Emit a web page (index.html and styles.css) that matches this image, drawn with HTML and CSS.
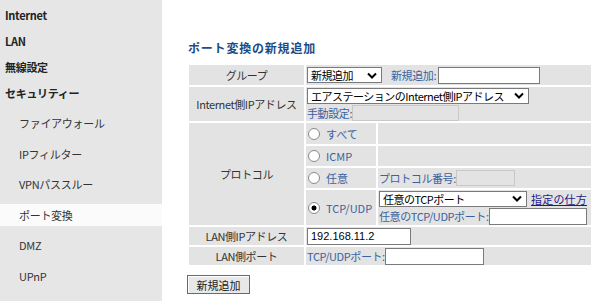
FILE: index.html
```html
<!DOCTYPE html>
<html lang="ja">
<head>
<meta charset="utf-8">
<link rel="stylesheet" href="styles.css">
</head>
<body>
<div class="page">
  <nav class="side">
    <div class="top">Internet</div>
    <div class="top">LAN</div>
    <div class="top">無線設定</div>
    <div class="top">セキュリティー</div>
    <div class="subs">
      <div class="sub">ファイアウォール</div>
      <div class="sub">IPフィルター</div>
      <div class="sub">VPNパススルー</div>
      <div class="sub active">ポート変換</div>
      <div class="sub">DMZ</div>
      <div class="sub">UPnP</div>
    </div>
  </nav>
  <main class="main">
    <h1 class="title">ポート変換の新規追加</h1>
    <table class="form">
      <tr class="r-group">
        <th>グループ</th>
        <td colspan="2">
          <div class="line">
            <span class="sel w-group"><span class="sel-text">新規追加</span><svg class="chev" width="10" height="7" viewBox="0 0 10 7"><path d="M1 1.5 L5 5.5 L9 1.5" fill="none" stroke="#000" stroke-width="2"/></svg></span>
            <span class="blue lbl-new">新規追加:</span><input class="txt w-new" type="text">
          </div>
        </td>
      </tr>
      <tr class="r-inet">
        <th>Internet側IPアドレス</th>
        <td colspan="2">
          <div class="stack">
            <span class="sel w-inet"><span class="sel-text">エアステーションのInternet側IPアドレス</span><svg class="chev" width="10" height="7" viewBox="0 0 10 7"><path d="M1 1.5 L5 5.5 L9 1.5" fill="none" stroke="#000" stroke-width="2"/></svg></span>
            <div class="line"><span class="blue">手動設定:</span><input class="txt dis w-manual" type="text" disabled></div>
          </div>
        </td>
      </tr>
      <tr class="r-all">
        <th rowspan="4">プロトコル</th>
        <td class="radio-cell"><label class="rad"><input type="radio" name="p"><span>すべて</span></label></td>
        <td></td>
      </tr>
      <tr class="r-icmp">
        <td class="radio-cell"><label class="rad"><input type="radio" name="p"><span>ICMP</span></label></td>
        <td></td>
      </tr>
      <tr class="r-any">
        <td class="radio-cell"><label class="rad"><input type="radio" name="p"><span>任意</span></label></td>
        <td><div class="line"><span class="blue">プロトコル番号:</span><input class="txt dis w-proto" type="text" disabled></div></td>
      </tr>
      <tr class="r-tcp">
        <td class="radio-cell"><label class="rad"><input type="radio" name="p" checked><span>TCP/UDP</span></label></td>
        <td class="tcp-cell">
          <div class="stack">
            <div class="line"><span class="sel w-tcp"><span class="sel-text">任意のTCPポート</span><svg class="chev" width="10" height="7" viewBox="0 0 10 7"><path d="M1 1.5 L5 5.5 L9 1.5" fill="none" stroke="#000" stroke-width="2"/></svg></span><a class="link" href="#">指定の仕方</a></div>
            <div class="line"><span class="blue">任意のTCP/UDPポート:</span><input class="txt w-anyport" type="text"></div>
          </div>
        </td>
      </tr>
      <tr class="r-lanip">
        <th>LAN側IPアドレス</th>
        <td colspan="2"><input class="txt w-lanip" type="text" value="192.168.11.2"></td>
      </tr>
      <tr class="r-lanport">
        <th>LAN側ポート</th>
        <td colspan="2"><div class="line"><span class="blue">TCP/UDPポート:</span><input class="txt w-lanport" type="text"></div></td>
      </tr>
    </table>
    <button class="btn" type="button">新規追加</button>
  </main>
</div>
</body>
</html>
```

FILE: styles.css
```css
html, body {
  margin: 0;
  padding: 0;
  background: #ffffff;
}
body {
  font-family: "Noto Sans CJK JP", "Noto Sans", sans-serif;
  font-size: 11px;
  color: #333333;
}
.page {
  display: flex;
  width: 600px;
  height: 301px;
  overflow: hidden;
}
.side {
  width: 162px;
  flex: none;
  background: #e6e6e6;
  display: flex;
  flex-direction: column;
  padding-top: 4px;
  gap: 4px;
}
.top {
  height: 22px;
  line-height: 22px;
  padding-left: 5px;
  font-weight: bold;
  color: #222;
  font-size: 11px;
  letter-spacing: -0.3px;
}
.subs {
  display: flex;
  flex-direction: column;
  gap: 8.5px;
  margin-top: 4px;
}
.sub {
  height: 22px;
  line-height: 22px;
  padding-left: 19px;
  color: #333;
  font-size: 11px;
  letter-spacing: -0.3px;
}
.sub.active {
  background: #fbfbfb;
}
.main {
  padding-left: 25px;
  flex: 1;
}
.title {
  margin: 40px 0 7px 1px;
  font-size: 12px;
  font-weight: bold;
  color: #1d4b86;
  letter-spacing: 0.8px;
  line-height: 16px;
}
.form {
  border-collapse: separate;
  border-spacing: 2px;
  width: 406px;
  margin-left: 0;
}
.form th, .form td {
  background: #e3e3e3;
  padding: 0 0 0 1px;
  vertical-align: middle;
}
.form th {
  width: 115px;
  font-weight: normal;
  color: #333;
  text-align: center;
  padding: 0;
  letter-spacing: -0.4px;
}
.radio-cell {
  width: 69px;
}
.r-group { height: 20px; }
.r-inet { height: 34px; }
.r-all { height: 21px; }
.r-icmp { height: 20px; }
.r-any { height: 20px; }
.r-tcp { height: 35px; }
.r-lanip { height: 18px; }
.r-lanport { height: 18px; }
.line {
  display: flex;
  align-items: center;
}
.stack {
  display: flex;
  flex-direction: column;
  gap: 1px;
}
.blue {
  color: #3a62a0;
  letter-spacing: -0.4px;
  white-space: nowrap;
}
.lbl-new {
  margin-left: 9px;
}
.sel {
  display: inline-flex;
  align-items: center;
  box-sizing: border-box;
  height: 16px;
  border: 1px solid #7a7a7a;
  background: #fff;
  color: #000;
  padding: 0 4px 0 3px;
  font-size: 11px;
  letter-spacing: -0.5px;
  flex: none;
}
.sel-text {
  flex: 1;
  white-space: nowrap;
  overflow: hidden;
  line-height: 14px;
}
.chev {
  flex: none;
  margin-left: 3px;
}
.w-group { width: 75px; }
.w-inet { width: 222px; }
.w-tcp { width: 148px; }
.txt {
  box-sizing: border-box;
  height: 17px;
  border: 1px solid #7a7a7a;
  background: #fff;
  margin: 0;
  padding: 0 3px;
  font-family: "Liberation Sans", sans-serif;
  font-size: 11px;
  color: #000;
  outline: none;
}
.txt.dis {
  background: #e3e3e3;
  border-color: #c8c8c8;
}
.w-new { width: 102px; margin-left: 2px; }
.w-manual { width: 107px; height: 16px; }
.w-proto { width: 59px; height: 16px; }
.w-anyport { width: 98px; }
.w-lanip { width: 104px; display: block; }
.w-lanport { width: 99px; }
.rad {
  display: flex;
  align-items: center;
  color: #3a62a0;
  font-size: 11px;
}
.rad input {
  appearance: none;
  -webkit-appearance: none;
  width: 12px;
  height: 12px;
  margin: 0 6px 0 1px;
  border: 1px solid #8a8a8a;
  border-radius: 50%;
  background: #fff;
  box-sizing: border-box;
}
.rad input:checked {
  background: radial-gradient(circle, #000 0 2.2px, #fff 2.8px);
}
.link {
  color: #1c1c8a;
  text-decoration: underline;
  margin-left: 4px;
  font-size: 11px;
  letter-spacing: 0.2px;
}
.btn {
  margin-top: 8px;
  height: 19px;
  width: 63px;
  padding: 0;
  border: 1px solid #6a6a6a;
  background: #e8e8e8;
  font-family: "Noto Sans CJK JP", sans-serif;
  font-size: 11px;
  color: #222;
  box-shadow: inset 1px 1px 0 #fff;
}
```
